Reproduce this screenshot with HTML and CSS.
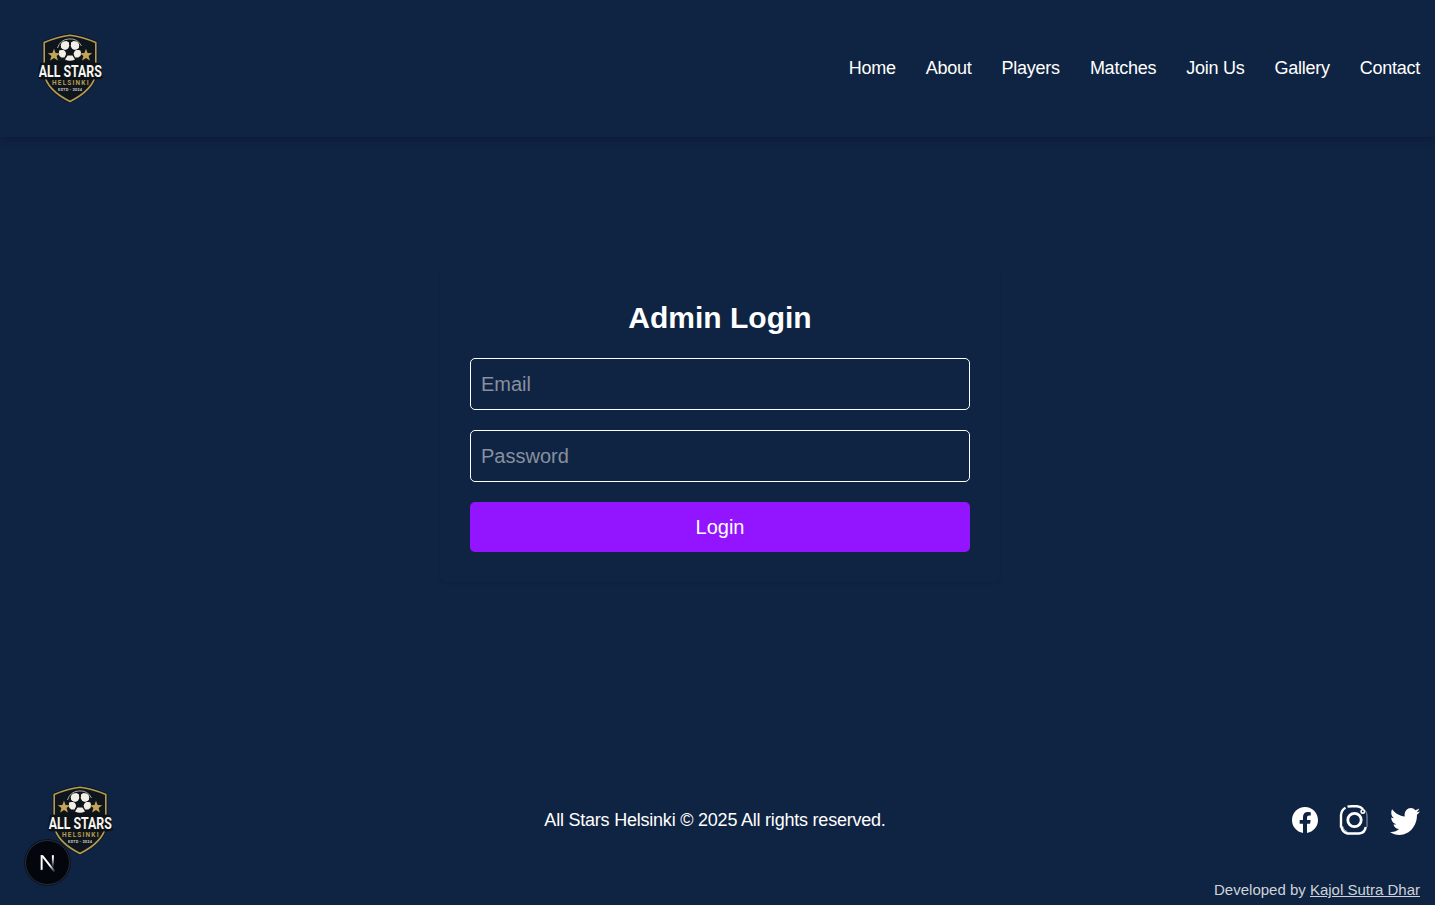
FILE: index.html
```html
<!DOCTYPE html>
<html lang="en">
<head>
<meta charset="utf-8">
<title>All Stars Helsinki</title>
<link rel="stylesheet" href="styles.css">
</head>
<body>
<svg class="defs" aria-hidden="true">
  <symbol id="crest" viewBox="0 0 80 80" overflow="visible">
    <path d="M40 7.2Q52 8.5 65.800 14.500V46Q63 62 40 73.500Q17 62 14.200 46V14.500Q28 8.500 40 7.200Z" fill="#0e151d" stroke="#0b1626" stroke-width="3.500"/>
    <path d="M40 7.2Q52 8.5 65.800 14.500V46Q63 62 40 73.500Q17 62 14.200 46V14.500Q28 8.500 40 7.200Z" fill="#0e151d" stroke="#b59b50" stroke-width="1.600"/>
    <path d="M27.500 20A13 13 0 0 1 51.500 18" fill="none" stroke="#a8a9a6" stroke-width="1"/>
    <g fill="#f3efe4">
      <path d="M32.500 15.500L36.500 13 39 14.500V18.500L35.500 21.500 31 20Z"/>
      <path d="M47.500 15.500L43.500 13 41 14.500V18.500L44.500 21.500 49 20Z"/>
      <path d="M29 22.500L33 22 36 25.500 34.500 29.500 31 29.500Q29 26.500 29 22.500Z"/>
      <path d="M50.500 22.500L46.500 22 43.500 25.500 45 29.500 48.500 29.500Q50.500 26.500 50.500 22.500Z"/>
      <path d="M37.500 27.500L42.500 27.500 45 31.500Q40 34 35 31.500Z"/>
      <circle cx="35" cy="17.500" r="4.200"/><circle cx="45" cy="17.500" r="4.200"/>
      <circle cx="32.300" cy="25.600" r="3.500"/><circle cx="47.500" cy="25.600" r="3.500"/>
    </g>
    <path d="M24 20.700L25.600 25 30.200 25.200 26.600 28 27.900 32.500 24 30 20.100 32.500 21.400 28 17.800 25.200 22.400 25Z" fill="#c4a555"/>
    <path d="M56 20.700L57.600 25 62.200 25.200 58.600 28 59.900 32.500 56 30 52.100 32.500 53.400 28 49.800 25.200 54.400 25Z" fill="#c4a555"/>
    <path d="M10 35Q40 31.500 70 35L73 50Q69 52 64 51.500H16Q11 52 7.500 50Z" fill="#0d1219"/>
    <text class="crest-name" x="40.300" y="48.700" textLength="63" lengthAdjust="spacingAndGlyphs">ALL STARS</text>
    <text class="crest-city" x="40.300" y="56.600" textLength="36.500" lengthAdjust="spacing">HELSINKI</text>
    <text class="crest-year" x="40" y="63" textLength="24" lengthAdjust="spacing">ESTD - 2024</text>
  </symbol>
</svg>
<header class="header">
  <svg class="logo"><use href="#crest" width="80" height="80"/></svg>
  <nav class="nav">
    <a>Home</a><a>About</a><a>Players</a><a>Matches</a><a>Join Us</a><a>Gallery</a><a>Contact</a>
  </nav>
</header>
<main class="main">
  <form class="card">
    <h1 class="title">Admin Login</h1>
    <input class="field" type="email" placeholder="Email">
    <input class="field" type="password" placeholder="Password">
    <button class="submit" type="button">Login</button>
  </form>
</main>
<footer class="footer">
  <div class="footer-row">
    <svg class="logo"><use href="#crest" width="80" height="80"/></svg>
    <p class="copyright">All Stars Helsinki © 2025 All rights reserved.</p>
    <div class="social">
      <svg class="facebook" viewBox="0 0 24 24"><path fill="#fff" d="M24 12.073C24 5.405 18.627 0 12 0S0 5.405 0 12.073C0 18.1 4.388 23.094 10.125 24v-8.437H7.078v-3.49h3.047v-2.66c0-3.025 1.792-4.697 4.533-4.697 1.312 0 2.686.236 2.686.236v2.971H15.830c-1.491 0-1.956.93-1.956 1.886v2.264h3.328l-.532 3.490h-2.796V24C19.612 23.094 24 18.100 24 12.073z"/></svg>
      <svg class="instagram" viewBox="0 0 28 30">
        <path fill="none" stroke="#fff" stroke-width="2.400" d="M8 1.700Q10 1.200 12 1.200H17.500Q21 1.500 23.500 4M1.500 22.500V10Q2 5 6 2.800M2 22Q3 27.500 8 28.500H19.500Q25.500 28 26.200 22"/>
        <path fill="none" stroke="#fff" stroke-width=".8" stroke-opacity=".75" d="M23 3.500Q27.500 6 27.500 11V22M3 21Q4 25.500 8 26.800"/>
        <circle cx="15" cy="15" r="6.700" fill="none" stroke="#fff" stroke-width="2.800"/>
        <circle cx="23.300" cy="6.400" r="1.700" fill="none" stroke="#fff" stroke-width="1.600"/>
      </svg>
      <svg class="twitter" viewBox="0 48 512 416" preserveAspectRatio="none"><path fill="#fff" d="M459.37 151.716c.325 4.548.325 9.097.325 13.645 0 138.72-105.583 298.558-298.558 298.558-59.452 0-114.68-17.219-161.137-47.106 8.447.974 16.568 1.299 25.34 1.299 49.055 0 94.213-16.568 130.274-44.832-46.132-.975-84.792-31.188-98.112-72.772 6.498.974 12.995 1.624 19.818 1.624 9.421 0 18.843-1.3 27.614-3.573-48.081-9.747-84.143-51.98-84.143-102.985v-1.299c13.969 7.797 30.214 12.67 47.431 13.319-28.264-18.843-46.781-51.005-46.781-87.391 0-19.492 5.197-37.36 14.294-52.954 51.655 63.675 129.3 105.258 216.365 109.807-1.624-7.797-2.599-15.918-2.599-24.04 0-57.828 46.782-104.934 104.934-104.934 30.213 0 57.502 12.67 76.67 33.137 23.715-4.548 46.456-13.32 66.599-25.34-7.798 24.366-24.366 44.833-46.132 57.827 21.117-2.273 41.584-8.122 60.426-16.243-14.292 20.791-32.161 39.308-52.628 54.253z"/></svg>
    </div>
  </div>
  <p class="credit">Developed by <a>Kajol Sutra Dhar</a></p>
</footer>
<div class="dev-badge">
  <svg viewBox="0 0 44 44">
    <defs>
      <linearGradient id="diag" x1="0" y1="0" x2="1" y2="1"><stop offset=".6" stop-color="#fff"/><stop offset="1" stop-color="#fff" stop-opacity="0"/></linearGradient>
      <linearGradient id="stem" x1="0" y1="0" x2="0" y2="1"><stop offset=".2" stop-color="#fff"/><stop offset="1" stop-color="#fff" stop-opacity="0"/></linearGradient>
    </defs>
    <path fill="#fff" d="M15 14.500H17V29.500H15Z"/>
    <path fill="url(#diag)" d="M15 14.500H17.500L30 30.500 28.500 32Z"/>
    <path fill="url(#stem)" d="M26.500 14.500H28.500V27H26.500Z"/>
  </svg>
</div>
</body>
</html>
```
FILE: styles.css
```css
* { box-sizing: border-box; margin: 0; padding: 0; }
body {
  height: 905px;
  overflow: hidden;
  display: flex;
  flex-direction: column;
  background: #0f2442;
  color: #fff;
  font-family: "Liberation Sans", Arial, sans-serif;
  font-size: 20px;
}
.defs { position: absolute; width: 80px; height: 80px; visibility: hidden; overflow: visible; }
.header {
  height: 137px;
  flex: none;
  display: flex;
  align-items: center;
  justify-content: space-between;
  padding: 0 15px 2px 30px;
  box-shadow: 0 2px 7px rgba(14, 16, 50, .5);
}
.logo { width: 80px; height: 80px; flex: none; overflow: visible; visibility: visible; }
.crest-name, .crest-city, .crest-year {
  font-family: Roboto, "Liberation Sans", Arial, sans-serif;
  font-weight: bold;
  text-anchor: middle;
}
.crest-name { font-size: 17px; fill: #f7f5ef; }
.crest-city { font-size: 6.500px; fill: #b89d50; }
.crest-year { font-size: 4px; fill: #c9c9c3; }
.nav { display: flex; gap: 30px; font-size: 18px; letter-spacing: -.25px; line-height: 28px; }
.main { flex: 1; display: flex; justify-content: center; padding: 131px 0 0 5px; }
.card {
  width: 560px;
  height: 314px;
  padding: 30px;
  display: flex;
  flex-direction: column;
  border-radius: 6px;
  box-shadow: 0 1px 3px rgba(14, 16, 50, .2);
}
.title { font-size: 30px; line-height: 40px; text-align: center; margin-bottom: 20px; }
.field {
  height: 52px;
  flex: none;
  margin-bottom: 20px;
  padding: 10px;
  border: 1px solid #fff;
  border-radius: 5px;
  background: transparent;
  color: #fff;
  font: 20px "Liberation Sans", Arial, sans-serif;
}
.field::placeholder { color: #87909f; }
.submit {
  height: 50px;
  flex: none;
  border: 0;
  border-radius: 5px;
  background: #9314ff;
  color: #fff;
  font: 20px "Liberation Sans", Arial, sans-serif;
}
.footer { height: 125px; flex: none; padding: 0 15px 0 40px; }
.footer-row { height: 80px; display: flex; align-items: center; justify-content: space-between; }
.copyright { padding-left: 18px; font-size: 18px; letter-spacing: -.22px; }
.social { display: flex; align-items: center; }
.facebook { width: 26px; height: 26px; margin-right: 21px; }
.instagram { width: 29px; height: 30px; margin-right: 22px; }
.twitter { width: 30px; height: 27px; margin-top: 2px; }
.credit { margin-top: 20px; font-size: 15px; line-height: 20px; text-align: right; color: #ced3da; }
.credit a { text-decoration: underline; }
.dev-badge {
  position: absolute;
  left: 25px;
  top: 840px;
  width: 45px;
  height: 45px;
  border-radius: 50%;
  background: #04060d;
  border: 1px solid #282c35;
  box-shadow: 0 0 0 1px #0b1424;
}
.dev-badge svg { display: block; width: 43px; height: 43px; }
```
